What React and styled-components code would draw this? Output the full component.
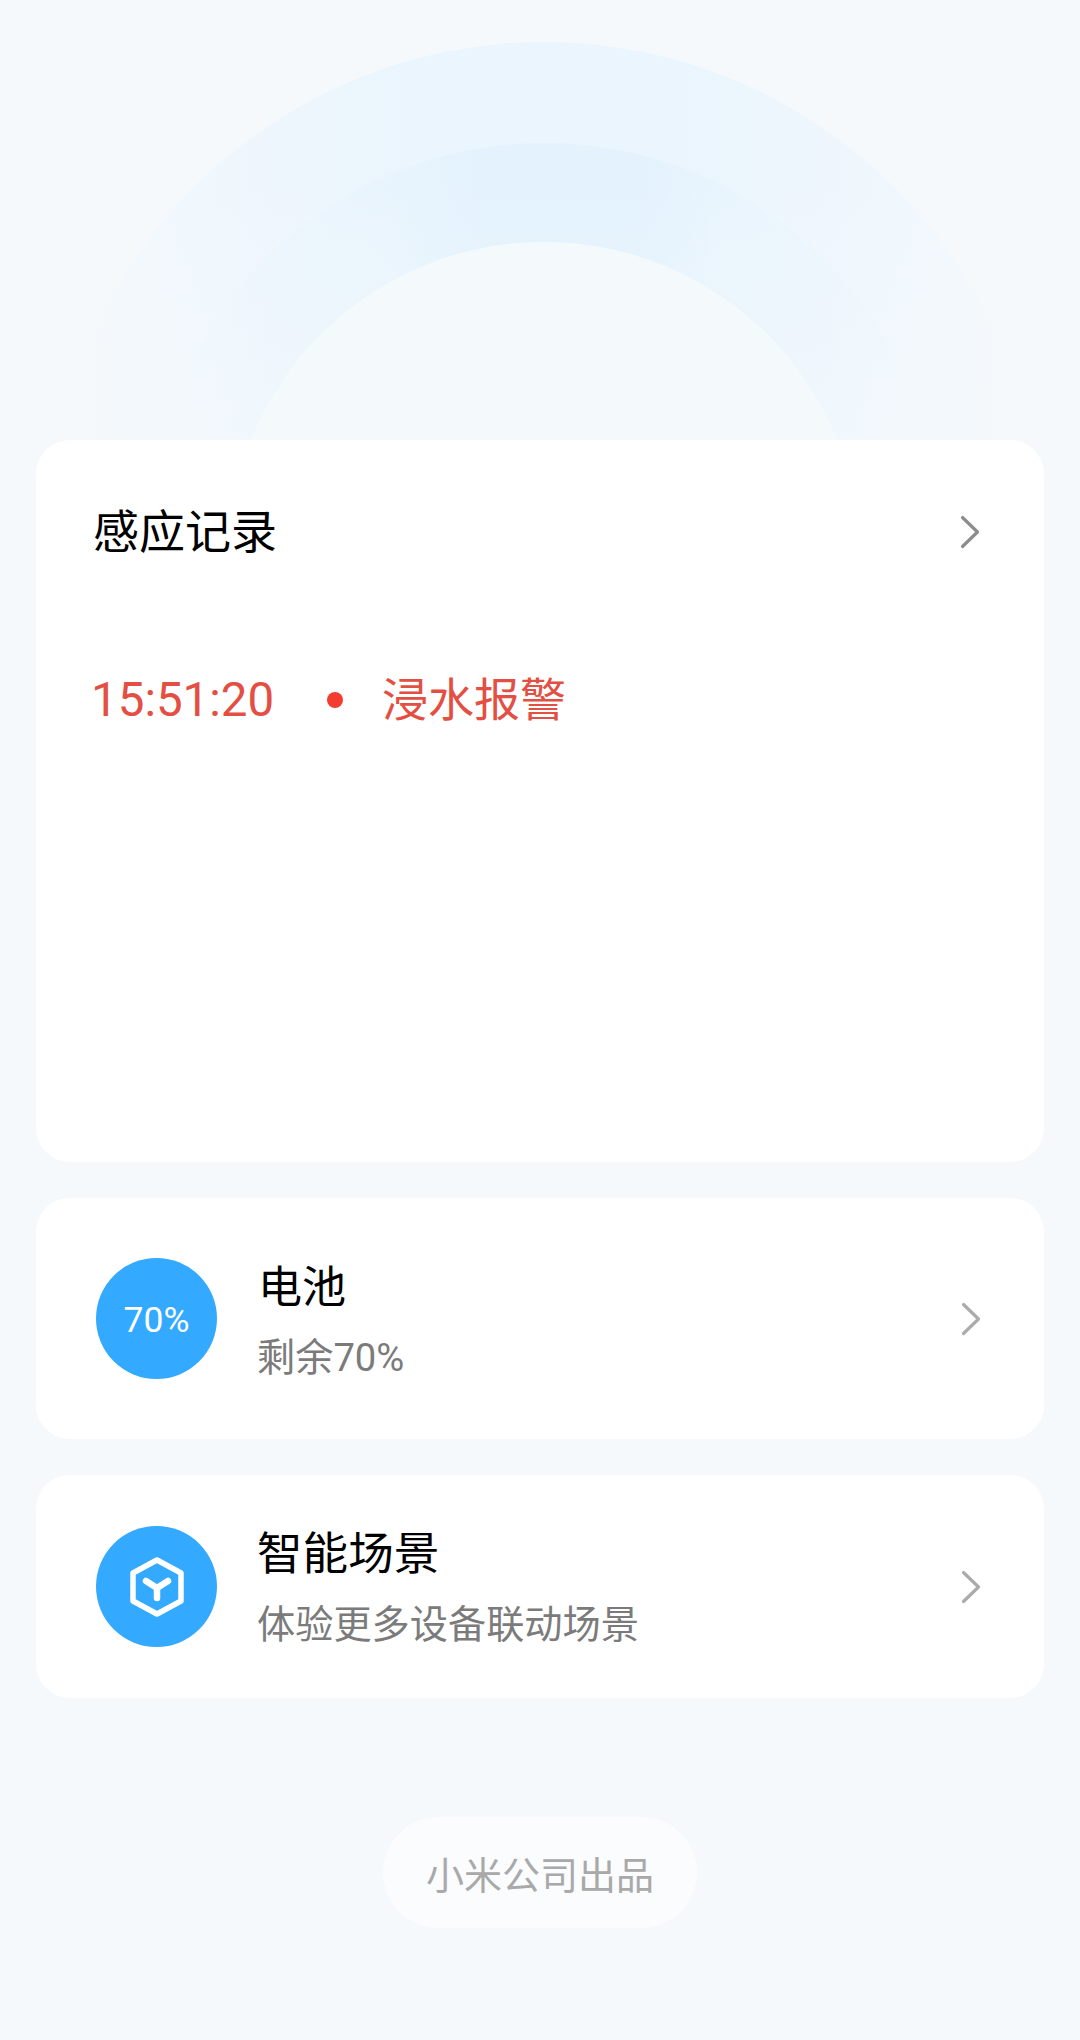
import React from 'react';
import styled, { createGlobalStyle } from 'styled-components';

const fontStack = `Roboto, "Noto Sans CJK SC", sans-serif`;

const Chevron = ({ color = '#ababab' }) => (
  <ChevronIcon viewBox="0 0 20 34" fill="none" stroke={color} strokeWidth="3.2" strokeLinecap="round" strokeLinejoin="round">
    <path d="M2.5 2.5 L17.5 17 L2.5 31.5" />
  </ChevronIcon>
);

const SceneIcon = () => (
  <svg width="56" height="60" viewBox="0 0 56 60" fill="none" stroke="#fff" strokeLinecap="round" strokeLinejoin="round">
    <path d="M28 3 L52 16 L52 44 L28 57 L4 44 L4 16 Z" strokeWidth="5.5" />
    <path d="M17 24 L28 31 L39 24 M28 31 L28 41" strokeWidth="6.5" />
  </svg>
);

const App = () => (
  <Page>
    <GlobalStyle />
    <Hero viewBox="0 0 1080 440" preserveAspectRatio="none">
      <defs>
        <linearGradient id="outerFill" x1="0" y1="0" x2="1" y2="0">
          <stop offset="0.02" stopColor="#eaf5fd" stopOpacity="0" />
          <stop offset="0.2" stopColor="#edf6fd" stopOpacity="0.8" />
          <stop offset="0.36" stopColor="#eaf5fd" />
          <stop offset="0.64" stopColor="#eaf5fd" />
          <stop offset="0.8" stopColor="#edf6fd" stopOpacity="0.8" />
          <stop offset="0.98" stopColor="#eaf5fd" stopOpacity="0" />
        </linearGradient>
        <linearGradient id="middleFill" x1="0" y1="0" x2="1" y2="0">
          <stop offset="0.05" stopColor="#e3f2fd" stopOpacity="0" />
          <stop offset="0.3" stopColor="#e8f4fd" stopOpacity="0.75" />
          <stop offset="0.42" stopColor="#e3f2fd" />
          <stop offset="0.62" stopColor="#e3f2fd" />
          <stop offset="0.72" stopColor="#e8f4fd" stopOpacity="0.75" />
          <stop offset="0.95" stopColor="#e3f2fd" stopOpacity="0" />
        </linearGradient>
        <linearGradient id="fadeOut" x1="0" y1="0" x2="0" y2="1">
          <stop offset="0" stopColor="#f5f9fc" stopOpacity="0" />
          <stop offset="1" stopColor="#f5f9fc" stopOpacity="0.55" />
        </linearGradient>
      </defs>
      <circle cx="544" cy="537" r="495" fill="url(#outerFill)" />
      <circle cx="544" cy="538" r="395" fill="url(#middleFill)" />
      <rect x="0" y="180" width="1080" height="260" fill="url(#fadeOut)" />
      <circle cx="544" cy="558" r="316" fill="#f4fafc" />
    </Hero>
    <Cards>
      <RecordCard>
        <RecordHeader>
          <CardTitle>感应记录</CardTitle>
          <Chevron color="#8c8c8c" />
        </RecordHeader>
        <EventRow>
          <EventTime>15:51:20</EventTime>
          <EventDot />
          <EventName>浸水报警</EventName>
        </EventRow>
      </RecordCard>
      <LinkCard $height={241}>
        <Badge>
          <BadgeText>70%</BadgeText>
        </Badge>
        <LinkText $gap={18} $shift={8}>
          <LinkTitle $size={44} $indent={1}>电池</LinkTitle>
          <LinkSub>剩余70%</LinkSub>
        </LinkText>
        <Chevron />
      </LinkCard>
      <LinkCard $height={223}>
        <Badge>
          <SceneIcon />
        </Badge>
        <LinkText $gap={18} $shift={6}>
          <LinkTitle $size={45.6}>智能场景</LinkTitle>
          <LinkSub>体验更多设备联动场景</LinkSub>
        </LinkText>
        <Chevron />
      </LinkCard>
    </Cards>
    <Footer>
      <MadeBy>小米公司出品</MadeBy>
    </Footer>
  </Page>
);

export default App;

const GlobalStyle = createGlobalStyle`
  html, body {
    margin: 0;
    padding: 0;
    background: #f5f9fc;
  }
`;

const Page = styled.div`
  width: 1080px;
  height: 2040px;
  overflow: hidden;
  font-family: ${fontStack};
  background: #f5f9fc;
`;

const Hero = styled.svg`
  display: block;
  width: 1080px;
  height: 440px;
`;

const Cards = styled.div`
  display: flex;
  flex-direction: column;
  gap: 36px;
  padding: 0 36px;
`;

const RecordCard = styled.section`
  height: 722px;
  padding: 68px 64px 0 57px;
  box-sizing: border-box;
  background: #fff;
  border-radius: 34px;
`;

const RecordHeader = styled.header`
  display: flex;
  justify-content: space-between;
  align-items: center;
  height: 48px;
`;

const CardTitle = styled.h2`
  margin: 0;
  font-size: 46px;
  font-weight: 400;
  line-height: 48px;
  color: #000;
`;

const ChevronIcon = styled.svg`
  flex: none;
  width: 20px;
  height: 34px;
  margin-left: auto;
`;

const EventRow = styled.div`
  display: flex;
  align-items: center;
  margin-top: 120px;
  color: #e34f43;
  font-size: 46px;
  line-height: 48px;
`;

const EventTime = styled.span`
  width: 180px;
  margin-left: -2px;
  font-size: 47.5px;
`;

const EventDot = styled.i`
  width: 16px;
  height: 16px;
  margin: 0 39px 0 56px;
  border-radius: 50%;
  background: #f23d30;
`;

const EventName = styled.span``;

const LinkCard = styled.section`
  display: flex;
  align-items: center;
  height: ${p => p.$height}px;
  padding: 0 63px 0 60px;
  box-sizing: border-box;
  background: #fff;
  border-radius: 34px;
`;

const Badge = styled.div`
  display: flex;
  align-items: center;
  justify-content: center;
  flex: none;
  width: 121px;
  height: 121px;
  border-radius: 50%;
  background: #33a9ff;
`;

const BadgeText = styled.span`
  padding-top: 2px;
  color: #fff;
  font-size: 35.5px;
  line-height: 40px;
`;

const LinkText = styled.div`
  display: flex;
  flex-direction: column;
  gap: ${p => p.$gap}px;
  margin-left: 40px;
  padding-top: ${p => p.$shift}px;
`;

const LinkTitle = styled.h3`
  margin: 0;
  padding-left: ${p => p.$indent || 0}px;
  font-size: ${p => p.$size}px;
  font-weight: 400;
  line-height: 52px;
  color: #000;
`;

const LinkSub = styled.p`
  margin: 0;
  font-size: 38.2px;
  line-height: 52px;
  color: #7b7b7b;
`;

const Footer = styled.footer`
  display: flex;
  justify-content: center;
  margin-top: 119px;
`;

const MadeBy = styled.div`
  display: flex;
  align-items: center;
  justify-content: center;
  width: 314px;
  height: 111px;
  border-radius: 56px;
  background: #fafcfd;
  color: #a9a9a9;
  font-size: 38px;
`;
